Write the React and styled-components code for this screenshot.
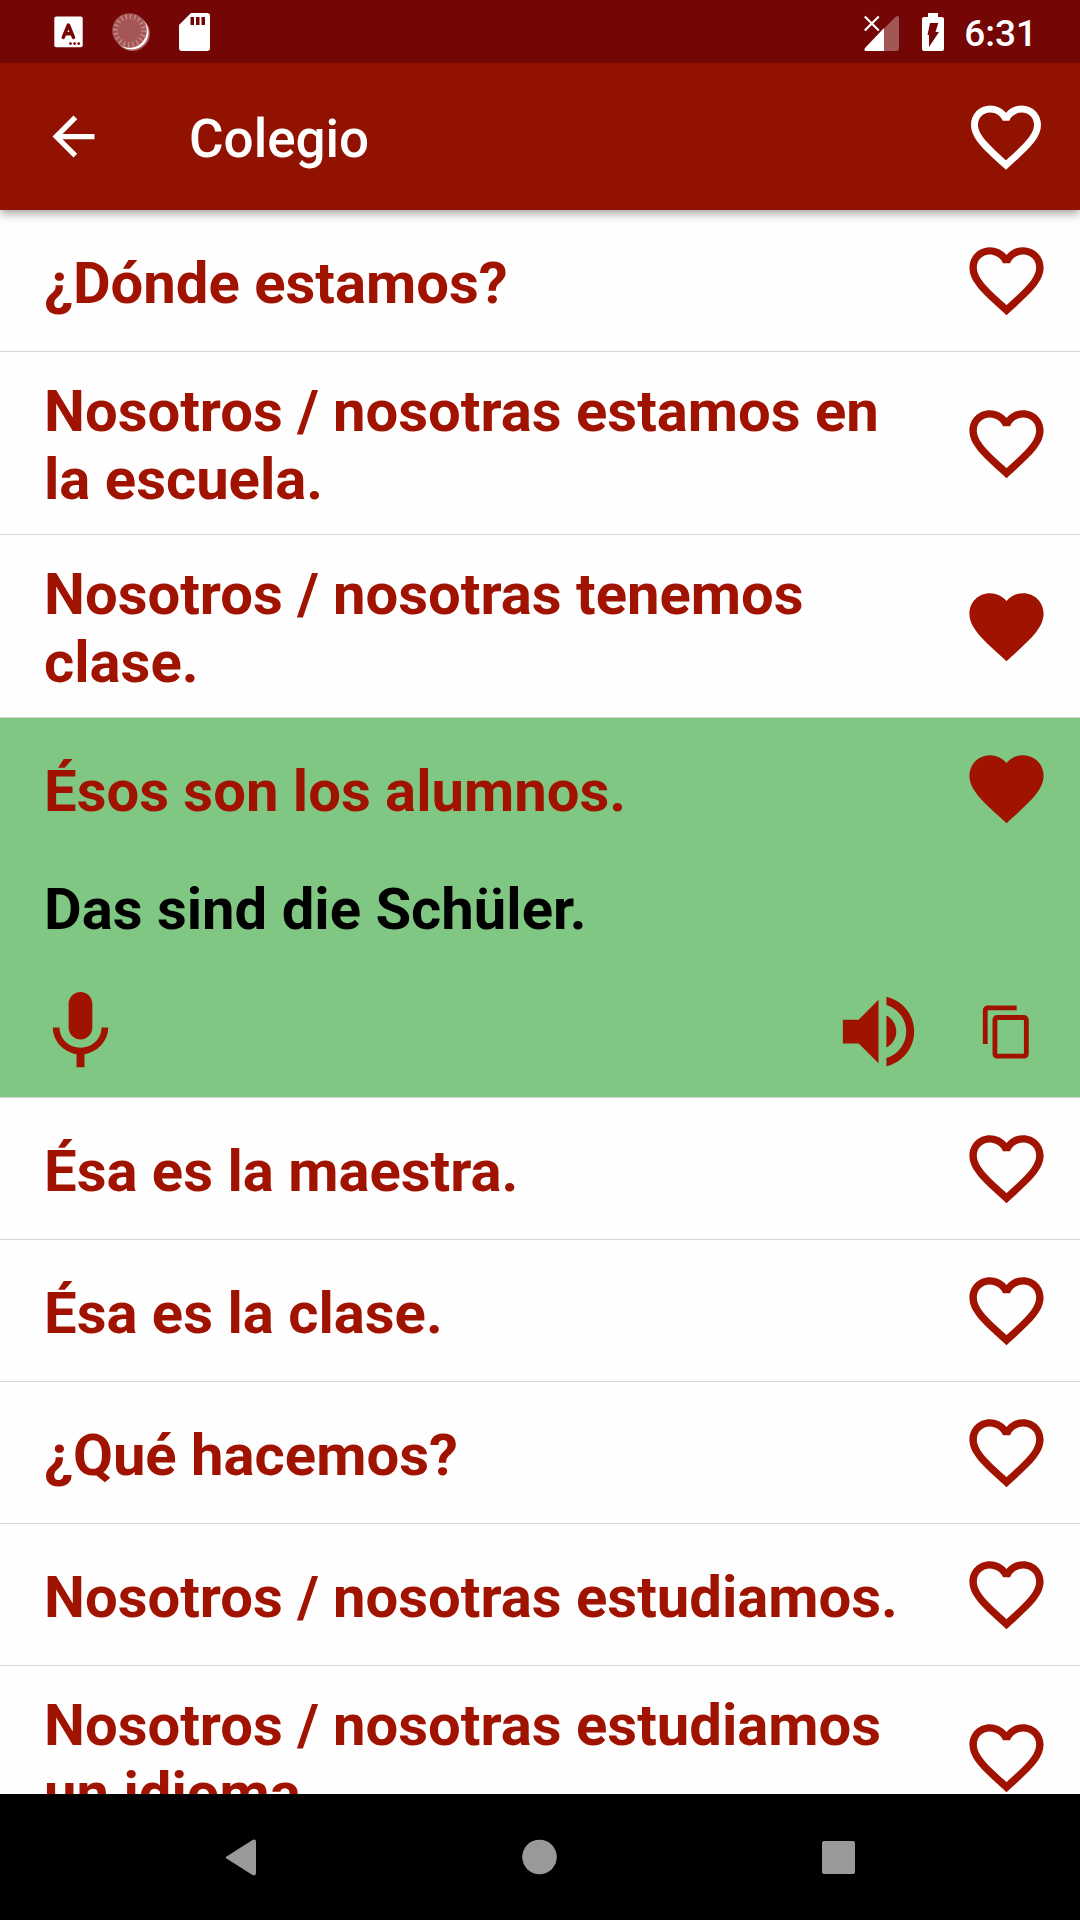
import React, { useState } from 'react';
import styled, { createGlobalStyle } from 'styled-components';

const GlobalStyle = createGlobalStyle`
  * {
    box-sizing: border-box;
  }

  body {
    margin: 0;
    background: #fefefe;
    font-family: Roboto, 'Liberation Sans', sans-serif;
  }
`;

const Screen = styled.div`
  display: flex;
  flex-direction: column;
  height: 100vh;
  overflow: hidden;
`;

const StatusBar = styled.div`
  position: relative;
  z-index: 2;
  display: flex;
  flex: none;
  justify-content: space-between;
  align-items: center;
  height: 63px;
  padding: 0 43px 0 52px;
  background: #750606;
  color: #fff;
`;

const StatusGroup = styled.div`
  display: flex;
  align-items: center;
  gap: ${props => props.$gap};
`;

const Clock = styled.time`
  font-size: 37px;
  font-weight: 500;
  line-height: 44px;
  padding-top: 4px;
`;

const AppBar = styled.header`
  position: relative;
  z-index: 1;
  display: flex;
  flex: none;
  align-items: center;
  height: 147px;
  padding: 0 32px 0 42px;
  background: #911200;
  color: #fff;
  box-shadow: 0 3px 10px rgba(0, 0, 0, 0.4);
`;

const Title = styled.h1`
  flex: 1;
  margin: 0 0 0 84px;
  padding-top: 4px;
  font-size: 53px;
  font-weight: 500;
  line-height: 60px;
`;

const IconButton = styled.button`
  display: flex;
  flex: none;
  padding: 0;
  border: 0;
  background: none;
  color: inherit;
  cursor: pointer;
`;

const Icon = styled.svg`
  display: block;
  width: ${props => props.$size};
  height: ${props => props.$size};
  fill: currentColor;
`;

const List = styled.ul`
  flex: 1;
  min-height: 0;
  margin: 0;
  padding: 0;
  overflow: hidden;
  list-style: none;
`;

const Item = styled.li`
  border-bottom: 1px solid #d6d6d6;
  background: ${props => (props.$open ? '#81c784' : '#fefefe')};
  color: #a01300;
`;

const Row = styled.div`
  display: flex;
  align-items: center;
  justify-content: space-between;
  min-height: 141px;
  padding: 23px 29px 23px 44px;
`;

const Phrase = styled.p`
  width: 860px;
  margin: 0 0 -2px;
  padding-top: 2px;
  font-size: 58px;
  font-weight: 700;
  line-height: 68px;
  cursor: pointer;
`;

const Translation = styled.p`
  margin: 0;
  padding: 16px 44px 0;
  color: #000;
  font-size: 58px;
  font-weight: 700;
  line-height: 68px;
`;

const Actions = styled.div`
  display: flex;
  align-items: center;
  gap: 52px;
  padding: 41px 44px 18px 33px;
`;

const Spacer = styled.span`
  flex: 1;
`;

const NavBar = styled.nav`
  display: flex;
  flex: none;
  align-items: center;
  justify-content: center;
  gap: 236px;
  height: 126px;
  background: #000;
  color: #999;
`;

const PATHS = {
  back: 'M20 11H7.83l5.59-5.59L12 4l-8 8 8 8 1.41-1.41L7.83 13H20v-2z',
  heart:
    'M12 21.35l-1.45-1.32C5.4 15.36 2 12.28 2 8.5 2 5.42 4.42 3 7.5 3c1.74 0 3.41.81 4.5 2.09C13.09 3.81 14.76 3 16.5 3 19.58 3 22 5.42 22 8.5c0 3.78-3.4 6.86-8.55 11.54L12 21.35z',
  heartOutline:
    'M16.5 3c-1.74 0-3.41.81-4.5 2.09C10.91 3.81 9.24 3 7.5 3 4.42 3 2 5.42 2 8.5c0 3.78 3.4 6.86 8.55 11.54L12 21.35l1.45-1.32C18.6 15.36 22 12.28 22 8.5 22 5.42 19.58 3 16.5 3zm-4.4 15.55l-.1.1-.1-.1C7.14 14.24 4 11.39 4 8.5 4 6.5 5.5 5 7.5 5c1.54 0 3.04.99 3.57 2.36h1.87C13.46 5.99 14.96 5 16.5 5c2 0 3.5 1.5 3.5 3.5 0 2.89-3.14 5.74-7.9 10.05z',
  mic:
    'M12 14c1.66 0 2.99-1.34 2.99-3L15 5c0-1.66-1.34-3-3-3S9 3.34 9 5v6c0 1.66 1.34 3 3 3zm5.3-3c0 3-2.54 5.1-5.3 5.1S6.7 14 6.7 11H5c0 3.41 2.72 6.23 6 6.72V21h2v-3.28c3.28-.48 6-3.3 6-6.72h-1.7z',
  volume:
    'M3 9v6h4l5 5V4L7 9H3zm13.5 3c0-1.77-1.02-3.29-2.5-4.03v8.05c1.48-.73 2.5-2.25 2.5-4.02zM14 3.23v2.06c2.89.86 5 3.54 5 6.71s-2.11 5.85-5 6.71v2.06c4.01-.91 7-4.49 7-8.77s-2.99-7.86-7-8.77z',
  copy:
    'M16 1H4c-1.1 0-2 .9-2 2v14h2V3h12V1zm3 4H8c-1.1 0-2 .9-2 2v14c0 1.1.9 2 2 2h11c1.1 0 2-.9 2-2V7c0-1.1-.9-2-2-2zm0 16H8V7h11v14z',
};

const Glyph = ({ name, size }) => (
  <Icon viewBox="0 0 24 24" $size={size} aria-hidden="true">
    <path d={PATHS[name]} />
  </Icon>
);

const KeyboardIcon = () => (
  <svg width="32" height="32" viewBox="0 0 32 32" aria-hidden="true">
    <rect x="2.3" y="0.6" width="28.4" height="30.6" rx="2" fill="#fff" />
    <path d="M11.300 21.400 16.400 9 21.500 21.400M13.200 17.800H19.600" fill="none" stroke="#750606" strokeWidth="3.500" strokeLinecap="round" strokeLinejoin="round" />
    <path d="M18.500 27.600h.01M22.600 27.600h.01M26.700 27.600h.01" stroke="#750606" strokeWidth="2.800" strokeLinecap="round" />
  </svg>
);

const SyncIcon = () => (
  <svg width="39" height="38" viewBox="0 0 39 38" aria-hidden="true">
    <circle cx="20.500" cy="20.500" r="17.500" fill="#a85a5a" />
    <circle cx="19.500" cy="19.500" r="17" fill="#fff" />
    <circle cx="17.500" cy="17.500" r="17.300" fill="#a65656" />
    <circle cx="17.500" cy="17.500" r="14" fill="none" stroke="#c89292" strokeWidth="5" strokeDasharray="1.2 3.198" />
  </svg>
);

const SdCardIcon = () => (
  <svg width="32" height="38" viewBox="0 0 32 38" aria-hidden="true">
    <path d="M12 0H28a3 3 0 0 1 3 3V35a3 3 0 0 1-3 3H3a3 3 0 0 1-3-3V12z" fill="#fff" />
    <path d="M11.500 4h3.500v8h-3.500zM17 4h3.500v8h-3.500zM22.500 4h3.500v8h-3.500z" fill="#750606" />
  </svg>
);

const SignalIcon = () => (
  <svg width="38" height="38" viewBox="0 0 38 38" aria-hidden="true">
    <path d="M32 3.500Q35 2 35 5V35a3 3 0 0 1-3 3H20V15.500z" fill="#a35656" />
    <path d="M20 15V38H2Q-.5 38 1 35z" fill="#fff" />
    <path d="M.8 3.500l14 14M14.800 3.500l-14 14" stroke="#fff" strokeWidth="2.200" />
  </svg>
);

const BatteryIcon = () => (
  <svg width="22" height="38" viewBox="0 0 22 38" aria-hidden="true">
    <path d="M6 0H16V4H20a2 2 0 0 1 2 2V36a2 2 0 0 1-2 2H2a2 2 0 0 1-2-2V6a2 2 0 0 1 2-2H6z" fill="#fff" />
    <path d="M8 10H16.300L13.500 19H17L7 34V22H5.500z" fill="#750606" />
  </svg>
);

const phrases = [
  { text: '¿Dónde estamos?', liked: false },
  { text: 'Nosotros / nosotras estamos en la escuela.', liked: false },
  { text: 'Nosotros / nosotras tenemos clase.', liked: true },
  { text: 'Ésos son los alumnos.', translation: 'Das sind die Schüler.', liked: true },
  { text: 'Ésa es la maestra.', liked: false },
  { text: 'Ésa es la clase.', liked: false },
  { text: '¿Qué hacemos?', liked: false },
  { text: 'Nosotros / nosotras estudiamos.', liked: false },
  { text: 'Nosotros / nosotras estudiamos un idioma.', liked: false },
];

const PhraseItem = ({ phrase, open, liked, onOpen, onLike }) => (
  <Item $open={open}>
    <Row>
      <Phrase lang="es" onClick={onOpen}>{phrase.text}</Phrase>
      <IconButton type="button" aria-label="Favorito" aria-pressed={liked} onClick={onLike}>
        <Glyph name={liked ? 'heart' : 'heartOutline'} size="89px" />
      </IconButton>
    </Row>
    {open && (
      <>
        <Translation lang="de">{phrase.translation}</Translation>
        <Actions>
          <IconButton type="button" aria-label="Grabar">
            <Glyph name="mic" size="95px" />
          </IconButton>
          <Spacer />
          <IconButton type="button" aria-label="Escuchar">
            <Glyph name="volume" size="95px" />
          </IconButton>
          <IconButton type="button" aria-label="Copiar">
            <Glyph name="copy" size="58px" />
          </IconButton>
        </Actions>
      </>
    )}
  </Item>
);

const App = () => {
  const [openIndex, setOpenIndex] = useState(3);
  const [likes, setLikes] = useState(phrases.map(p => p.liked));

  const toggleLike = index => setLikes(likes.map((l, i) => (i === index ? !l : l)));

  return (
    <Screen>
      <GlobalStyle />
      <StatusBar>
        <StatusGroup $gap="28px">
          <KeyboardIcon />
          <SyncIcon />
          <SdCardIcon />
        </StatusGroup>
        <StatusGroup $gap="20px">
          <SignalIcon />
          <BatteryIcon />
          <Clock>6:31</Clock>
        </StatusGroup>
      </StatusBar>

      <AppBar>
        <IconButton type="button" aria-label="Volver">
          <Glyph name="back" size="63px" />
        </IconButton>
        <Title>Colegio</Title>
        <IconButton type="button" aria-label="Favoritos">
          <Glyph name="heartOutline" size="84px" />
        </IconButton>
      </AppBar>

      <List>
        {phrases.map((phrase, i) => (
          <PhraseItem
            key={phrase.text}
            phrase={phrase}
            open={i === openIndex && Boolean(phrase.translation)}
            liked={likes[i]}
            onOpen={() => setOpenIndex(i)}
            onLike={() => toggleLike(i)}
          />
        ))}
      </List>

      <NavBar>
        <IconButton type="button" aria-label="Atrás">
          <svg width="63" height="63" viewBox="0 0 63 63" aria-hidden="true">
            <path d="M16.500 30.500 42.500 14Q46 12.500 46 16V47Q46 50.500 42.500 49L16.500 32.500Q15 31.500 16.500 30.500z" fill="currentColor" />
          </svg>
        </IconButton>
        <IconButton type="button" aria-label="Inicio">
          <svg width="63" height="63" viewBox="0 0 63 63" aria-hidden="true">
            <circle cx="30.500" cy="31" r="17.300" fill="currentColor" />
          </svg>
        </IconButton>
        <IconButton type="button" aria-label="Recientes">
          <svg width="63" height="63" viewBox="0 0 63 63" aria-hidden="true">
            <rect x="14" y="15" width="33" height="33" rx="2" fill="currentColor" />
          </svg>
        </IconButton>
      </NavBar>
    </Screen>
  );
};

export default App;
